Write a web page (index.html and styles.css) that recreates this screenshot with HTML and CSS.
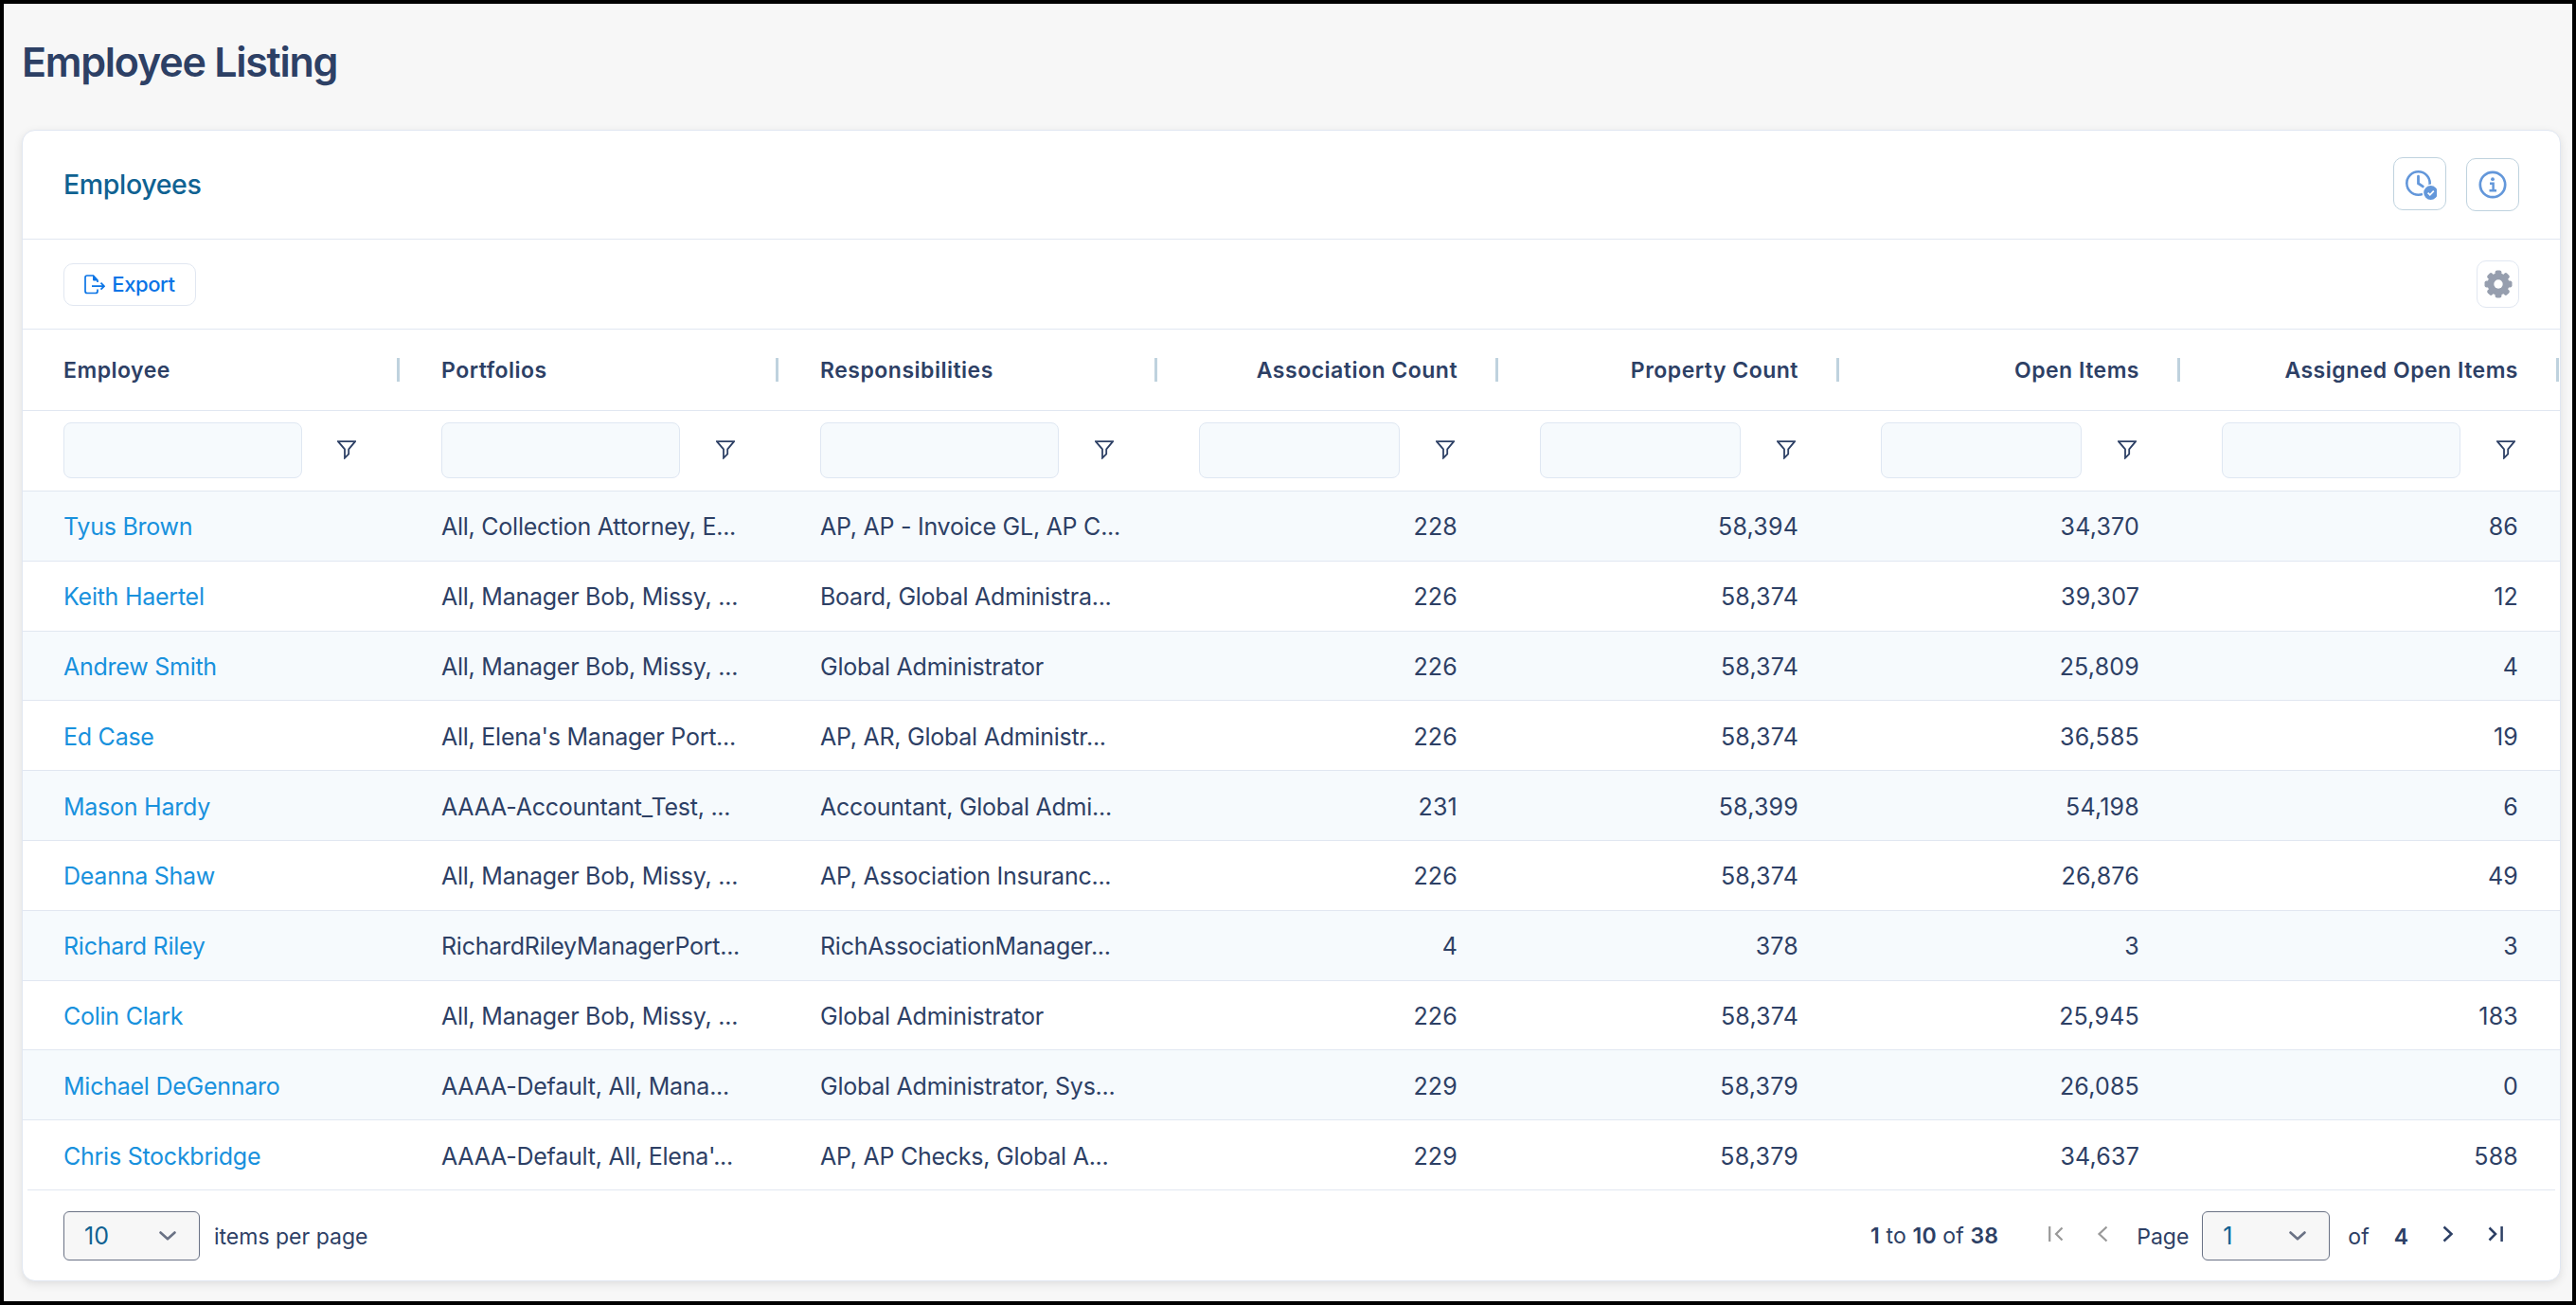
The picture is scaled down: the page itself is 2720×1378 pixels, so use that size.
FILE: index.html
```html
<!DOCTYPE html>
<html lang="en">
<head>
    <meta charset="UTF-8">
    <meta name="viewport" content="width=device-width, initial-scale=1.0">
    <title>Employee Listing</title>
    <link rel="stylesheet" href="styles.css">
</head>
<body>
<svg class="sprite" width="0" height="0">
    <symbol id="funnel" viewBox="0 0 20 20">
        <path d="M1 1.2h18L12.2 9.3v5L8 18.6V9.3z" fill="none" stroke="currentColor" stroke-width="1.8"/>
    </symbol>
    <symbol id="down" viewBox="0 0 18 10">
        <path d="M1.5 1.5L9 8.3l7.500-6.800" fill="none" stroke="currentColor" stroke-width="2.600" stroke-linecap="round" stroke-linejoin="round"/>
    </symbol>
</svg>
<div id="page">
    <h1>Employee Listing</h1>

    <div class="card">
        <div class="card-header">
            <h2>Employees</h2>
            <button class="icon-button clock-button">
                <svg width="36" height="33" viewBox="-2 -1 36 33">
                    <circle cx="14.5" cy="14.5" r="12.200" fill="none" stroke="#6397da" stroke-width="2.600"/>
                    <path d="M14.5 7.2v7.500l4.800 3.200" fill="none" stroke="#6397da" stroke-width="2.800" stroke-linecap="round"/>
                    <circle cx="27.600" cy="24.500" r="8.200" fill="#6397da" stroke="#fff" stroke-width="1.600"/>
                    <path d="M24.600 24.600l2.200 2.200 4-4.200" fill="none" stroke="#fff" stroke-width="1.800"/>
                </svg>
            </button>
            <button class="icon-button info-button">
                <svg width="30" height="30" viewBox="0 0 30 30">
                    <circle cx="15" cy="15" r="13.200" fill="none" stroke="#6397da" stroke-width="2.700"/>
                    <circle cx="15" cy="9.200" r="1.900" fill="#6397da"/>
                    <path d="M12 13.800h3.600v7M11.500 21.200h7.500" fill="none" stroke="#6397da" stroke-width="2.500"/>
                </svg>
            </button>
        </div>

        <div class="toolbar">
            <button class="export-button">
                <svg width="22" height="21" viewBox="0 0 22 21">
                    <path d="M14 8V6L9.500 1H3Q1 1 1 3v14.500q0 2 2 2h9q2 0 2-2V15.500" fill="none" stroke="#0a74e6" stroke-width="1.700"/>
                    <path d="M9.500 1v5H14z" fill="#0a74e6" stroke="#0a74e6"/>
                    <path d="M8 12.200h12.500M17.500 8.700l3.500 3.500-3.500 3.500" fill="none" stroke="#0a74e6" stroke-width="1.700"/>
                </svg>
                Export
            </button>
            <button class="gear-button">
                <svg width="30" height="30" viewBox="-15 -15 30 30">
                    <g fill="#969eae">
                        <circle r="11.500"/>
                        <rect x="-3.400" y="-14.500" width="6.800" height="29" rx="2"/>
                        <rect x="-3.400" y="-14.500" width="6.800" height="29" rx="2" transform="rotate(45)"/>
                        <rect x="-3.400" y="-14.500" width="6.800" height="29" rx="2" transform="rotate(90)"/>
                        <rect x="-3.400" y="-14.500" width="6.800" height="29" rx="2" transform="rotate(135)"/>
                    </g>
                    <circle r="4.700" fill="#fff"/>
                </svg>
            </button>
        </div>

        <div class="row head">
            <div>Employee</div>
            <div>Portfolios</div>
            <div>Responsibilities</div>
            <div>Association Count</div>
            <div>Property Count</div>
            <div>Open Items</div>
            <div>Assigned Open Items</div>
        </div>
        <div class="row filters">
            <div><input type="text"><svg class="funnel"><use href="#funnel"/></svg></div>
            <div><input type="text"><svg class="funnel"><use href="#funnel"/></svg></div>
            <div><input type="text"><svg class="funnel"><use href="#funnel"/></svg></div>
            <div><input type="text"><svg class="funnel"><use href="#funnel"/></svg></div>
            <div><input type="text"><svg class="funnel"><use href="#funnel"/></svg></div>
            <div><input type="text"><svg class="funnel"><use href="#funnel"/></svg></div>
            <div><input type="text"><svg class="funnel"><use href="#funnel"/></svg></div>
        </div>

        <div class="rows">
            <div class="row"><div><a>Tyus Brown</a></div><div>All, Collection Attorney, E...</div><div>AP, AP - Invoice GL, AP C...</div><div>228</div><div>58,394</div><div>34,370</div><div>86</div></div>
            <div class="row"><div><a>Keith Haertel</a></div><div>All, Manager Bob, Missy, ...</div><div>Board, Global Administra...</div><div>226</div><div>58,374</div><div>39,307</div><div>12</div></div>
            <div class="row"><div><a>Andrew Smith</a></div><div>All, Manager Bob, Missy, ...</div><div>Global Administrator</div><div>226</div><div>58,374</div><div>25,809</div><div>4</div></div>
            <div class="row"><div><a>Ed Case</a></div><div>All, Elena's Manager Port...</div><div>AP, AR, Global Administr...</div><div>226</div><div>58,374</div><div>36,585</div><div>19</div></div>
            <div class="row"><div><a>Mason Hardy</a></div><div>AAAA-Accountant_Test, ...</div><div>Accountant, Global Admi...</div><div>231</div><div>58,399</div><div>54,198</div><div>6</div></div>
            <div class="row"><div><a>Deanna Shaw</a></div><div>All, Manager Bob, Missy, ...</div><div>AP, Association Insuranc...</div><div>226</div><div>58,374</div><div>26,876</div><div>49</div></div>
            <div class="row"><div><a>Richard Riley</a></div><div>RichardRileyManagerPort...</div><div>RichAssociationManager...</div><div>4</div><div>378</div><div>3</div><div>3</div></div>
            <div class="row"><div><a>Colin Clark</a></div><div>All, Manager Bob, Missy, ...</div><div>Global Administrator</div><div>226</div><div>58,374</div><div>25,945</div><div>183</div></div>
            <div class="row"><div><a>Michael DeGennaro</a></div><div>AAAA-Default, All, Mana...</div><div>Global Administrator, Sys...</div><div>229</div><div>58,379</div><div>26,085</div><div>0</div></div>
            <div class="row"><div><a>Chris Stockbridge</a></div><div>AAAA-Default, All, Elena'...</div><div>AP, AP Checks, Global A...</div><div>229</div><div>58,379</div><div>34,637</div><div>588</div></div>
        </div>

        <div class="pager">
            <div class="select size-select">10 <svg width="18" height="10"><use href="#down"/></svg></div>
            <span class="per-page">items per page</span>
            <span class="summary"><b>1</b> to <b>10</b> of <b>38</b></span>
            <svg class="first" width="16" height="16" viewBox="0 0 16 16"><path d="M1.200 0v16M14.500 1.500L8 8l6.500 6.500" fill="none" stroke="#999" stroke-width="2.200"/></svg>
            <svg class="prev" width="12" height="18" viewBox="0 0 12 18"><path d="M10.500 1.500L2.500 9l8 7.500" fill="none" stroke="#999" stroke-width="2.200"/></svg>
            <span class="page-label">Page</span>
            <div class="select page-select">1 <svg width="18" height="10"><use href="#down"/></svg></div>
            <span class="of">of</span>
            <b class="total">4</b>
            <svg class="next" width="12" height="18" viewBox="0 0 12 18"><path d="M1.500 1.500l8 7.500-8 7.500" fill="none" stroke="#2d4065" stroke-width="2.500"/></svg>
            <svg class="last" width="16" height="16" viewBox="0 0 16 16"><path d="M14.600 0v16M1.500 1.500L8 8l-6.500 6.500" fill="none" stroke="#2d4065" stroke-width="2.500"/></svg>
        </div>
    </div>
</div>
</body>
</html>
```

FILE: styles.css
```css
*{
    box-sizing: border-box;
}
body{
    margin: 0;
    font-family: Inter, "Liberation Sans", sans-serif;
    font-size: 25px;
    color: #2d4065;
}
.sprite{
    position: absolute;
}
#page{
    height: 1378px;
    border: 4px solid #000;
    background: #f7f7f7;
    padding: 0 12px 0 19px;
    overflow: hidden;
}
h1{
    margin: 0;
    height: 133px;
    line-height: 123px;
    font-size: 43px;
    font-weight: 600;
    letter-spacing: -1.25px;
}
.card{
    height: 1216px;
    background: #fff;
    border: 1px solid #e1e7f1;
    border-radius: 14px;
    box-shadow: 0 3px 10px rgba(0, 0, 0, 0.1);
    overflow: hidden;
}
button{
    background: #fff;
    border: 1px solid #e1e7f1;
    border-radius: 10px;
    padding: 0;
    font-family: inherit;
    display: flex;
    align-items: center;
    justify-content: center;
}
.card-header{
    height: 115px;
    padding: 0 43px;
    display: flex;
    align-items: center;
    border-bottom: 1px solid #e1e7f1;
}
h2{
    margin: 0 auto 1px 0;
    font-size: 28.5px;
    font-weight: 500;
    letter-spacing: -0.35px;
    color: #0f6292;
}
.icon-button{
    width: 56px;
    height: 56px;
    border-color: #bfd2de;
}
.clock-button{
    margin-right: 21px;
    margin-bottom: 2px;
}
.toolbar{
    height: 95px;
    padding: 0 43px;
    display: flex;
    align-items: center;
    justify-content: space-between;
    border-bottom: 1px solid #e1e7f1;
}
.export-button{
    width: 140px;
    height: 45px;
    gap: 7px;
    font-size: 22px;
    font-weight: 500;
    letter-spacing: -0.4px;
    color: #0a74e6;
}
.gear-button{
    width: 45px;
    height: 50px;
}

/* grid */
.row{
    display: grid;
    grid-template-columns: 398px 400px 400px 360px 360px 360px 400px;
    align-items: center;
    height: 73.8px;
    border-bottom: 1px solid #e1e7f1;
}
.row > div{
    padding: 2px 43px 0 44px;
    white-space: nowrap;
    letter-spacing: -0.25px;
}
.row > div:first-child{
    padding-left: 43px;
}
.row > div:nth-child(n+4){
    text-align: right;
    letter-spacing: 0.2px;
}
.row.head{
    height: 86px;
    font-size: 23px;
    font-weight: 600;
}
.row.head > div{
    height: 25px;
    line-height: 25px;
    border-right: 3px solid #bfd2de;
    padding-top: 1px;
    padding-right: 40px;
    letter-spacing: 0.5px;
}
.row.filters{
    height: 85px;
}
.rows .row:nth-child(odd){
    background: #f6fafd;
}
.rows .row:last-child{
    border-bottom: none;
}
.row.filters > div{
    display: flex;
    align-items: center;
    justify-content: space-between;
    padding-top: 0;
    padding-bottom: 1px;
    padding-right: 46px;
}
input{
    width: 252px;
    height: 59px;
    background: #f6fafd;
    border: 1px solid #dfe7f2;
    border-radius: 8px;
}
.filters > div:nth-child(4) input,
.filters > div:nth-child(5) input,
.filters > div:nth-child(6) input{
    width: 212px;
}
.funnel{
    width: 20px;
    height: 20px;
    margin-bottom: 2px;
}
a{
    color: #1891dd;
}

/* pager */
.pager{
    display: flex;
    align-items: center;
    height: 97px;
    margin: -1px 5px 0;
    padding: 0 55px 0 38px;
    border-top: 1px solid #e1e7f1;
    font-size: 23px;
}
.pager > svg{
    margin-bottom: 3px;
}
.pager > span, .total{
    padding-top: 2px;
}
.select{
    height: 52px;
    border: 1px solid #6a7285;
    border-radius: 6px;
    background: #f7f7f7;
    color: #0f6292;
    font-size: 25px;
    display: flex;
    align-items: center;
    justify-content: space-between;
    padding: 0 24px 0 21px;
}
.select svg{
    color: #6a7285;
}
.size-select{
    width: 144px;
}
.per-page{
    margin-left: 15px;
    margin-right: auto;
}
.pager > .summary{
    padding-top: 0;
    letter-spacing: 0.15px;
}
.first{
    margin-left: 53px;
}
.prev{
    margin-left: 35px;
}
.page-label{
    margin: 0 14px 0 30px;
}
.page-select{
    width: 135px;
}
.of{
    margin-left: 19px;
}
.total{
    margin-left: 26px;
}
.next{
    margin-left: 36px;
}
.last{
    margin-left: 36px;
}
b{
    font-weight: 600;
}
```
